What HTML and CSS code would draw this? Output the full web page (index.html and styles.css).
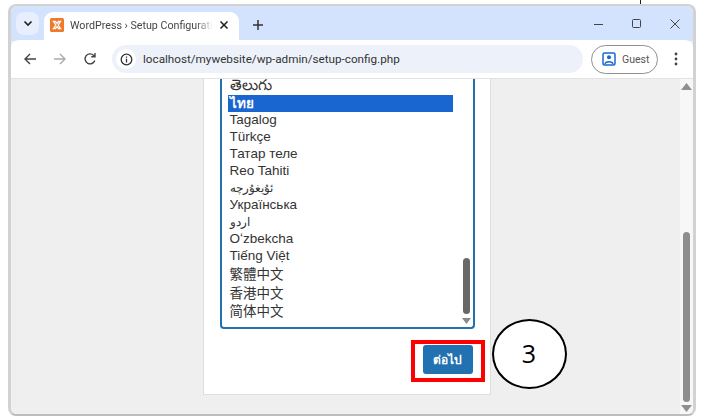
FILE: index.html
```html
<!DOCTYPE html>
<html lang="en">
<head>
<meta charset="utf-8">
<title>WordPress › Setup Configuration File</title>
<link rel="stylesheet" href="styles.css">
</head>
<body>
<div class="window">
  <header class="tabstrip">
    <button class="tabsearch" aria-label="Tab search">
      <svg width="10" height="7" viewBox="0 0 10 7"><path d="M1.5 1.5 5 5l3.5-3.5" fill="none" stroke="#1f1f1f" stroke-width="1.6"/></svg>
    </button>
    <div class="tab">
      <svg class="favicon" width="14" height="14" viewBox="0 0 14 14"><rect width="14" height="14" rx="1.5" fill="#ef7a2b"/><path d="M3.5 3.5h2l1.5 1.8L8.500 3.500h2l-2.300 3.500 2.300 3.500h-2L7 8.700 5.500 10.500h-2L5.800 7z" fill="none" stroke="#fff" stroke-width="1.300"/></svg>
      <span class="tabtitle">WordPress › Setup Configuratio</span>
      <svg class="tabclose" width="10" height="10" viewBox="0 0 10 10"><path d="M1.500 1.500l7 7m0-7l-7 7" stroke="#1f1f1f" stroke-width="1.500"/></svg>
    </div>
    <svg class="newtab" width="12" height="12" viewBox="0 0 12 12"><path d="M6 1v10M1 6h10" stroke="#333" stroke-width="1.500"/></svg>
    <div class="winctrls">
      <svg width="12" height="12" viewBox="0 0 12 12"><path d="M1 6.500h9" stroke="#444" stroke-width="1"/></svg>
      <svg width="12" height="12" viewBox="0 0 12 12"><rect x="1.500" y="1.500" width="8" height="8" rx="1" fill="none" stroke="#444" stroke-width="1"/></svg>
      <svg width="12" height="12" viewBox="0 0 12 12"><path d="M1.500 1.500l9 9m0-9l-9 9" stroke="#444" stroke-width="1"/></svg>
    </div>
  </header>
  <nav class="toolbar">
    <svg class="navicon" width="14" height="14" viewBox="0 0 14 14"><path d="M13 7H2M7 2 2 7l5 5" fill="none" stroke="#444" stroke-width="1.400"/></svg>
    <svg class="navicon" width="14" height="14" viewBox="0 0 14 14"><path d="M1 7h11M7 2l5 5-5 5" fill="none" stroke="#aaa" stroke-width="1.400"/></svg>
    <svg class="navicon" width="14" height="14" viewBox="0 0 14 14"><path d="M11.800 8.500A5 5 0 1 1 10.500 3.200L12 4.500M12 1v3.700H8.300" fill="none" stroke="#444" stroke-width="1.400"/></svg>
    <div class="omnibox">
      <span class="infochip"><svg width="13" height="13" viewBox="0 0 13 13"><circle cx="6.500" cy="6.500" r="5.300" fill="none" stroke="#333" stroke-width="1.300"/><path d="M6.500 5.800v3.700M6.500 3.400v1.300" stroke="#333" stroke-width="1.300"/></svg></span>
      <span class="url">localhost/mywebsite/wp-admin/setup-config.php</span>
    </div>
    <div class="guest">
      <svg width="14" height="14" viewBox="0 0 14 14"><rect x="1" y="1" width="12" height="12" rx="1.500" fill="none" stroke="#1a66d0" stroke-width="1.500"/><circle cx="7" cy="5.300" r="2" fill="#1a66d0"/><path d="M3 12c.5-3 7.500-3 8 0" fill="none" stroke="#1a66d0" stroke-width="1.300"/></svg>
      <span>Guest</span>
    </div>
    <svg class="kebab" width="4" height="14" viewBox="0 0 4 14"><circle cx="2" cy="2" r="1.400" fill="#444"/><circle cx="2" cy="7" r="1.400" fill="#444"/><circle cx="2" cy="12" r="1.400" fill="#444"/></svg>
  </nav>
  <main class="viewport">
    <div class="page">
      <section class="card">
        <div class="listbox">
          <ul class="options">
            <li class="telugu">తెలుగు</li>
            <li class="selected">ไทย</li>
            <li>Tagalog</li>
            <li>Türkçe</li>
            <li>Татар теле</li>
            <li>Reo Tahiti</li>
            <li class="rtl">ئۇيغۇرچە</li>
            <li>Українська</li>
            <li class="rtl">اردو</li>
            <li>Oʻzbekcha</li>
            <li>Tiếng Việt</li>
            <li class="cjk">繁體中文</li>
            <li class="cjk">香港中文</li>
            <li class="cjk">简体中文</li>
          </ul>
          <div class="listscroll">
            <span class="thumb"></span>
            <svg width="9" height="6" viewBox="0 0 9 6"><path d="M0 0h9L4.500 6z" fill="#8a8a8a"/></svg>
          </div>
        </div>
        <div class="actions">
          <div class="highlight"><button class="next">ต่อไป</button></div>
          <div class="badge">3</div>
        </div>
      </section>
    </div>
    <div class="scrollbar">
      <svg width="11" height="7" viewBox="0 0 11 7"><path d="M5.500 0 11 7H0z" fill="#8f8f8f"/></svg>
      <span class="track"><span class="sthumb"></span></span>
      <svg width="11" height="7" viewBox="0 0 11 7"><path d="M0 0h11L5.500 7z" fill="#8f8f8f"/></svg>
    </div>
  </main>
</div>
<span class="topmark"></span>
</body>
</html>
```
FILE: styles.css
```css
* { box-sizing: border-box; }
html, body { margin: 0; height: 100%; background: #fff; overflow: hidden; }
body { font-family: "Liberation Sans", "Noto Sans CJK SC", sans-serif; padding: 4px 8px 3px 8px; height: 419px; width: 704px; }
.topmark { position: absolute; left: 640px; top: 0; width: 1px; height: 4px; background: #222; }
.window { width: 688px; height: 412px; border: 2px solid #d2d2d2; border-left-width: 3px; border-right-width: 3px; border-bottom-color: #bdbdbd; border-radius: 8px; overflow: hidden; display: flex; flex-direction: column; background: #efefef; }
.tabstrip { height: 35px; background: #d3e3fd; display: flex; align-items: flex-end; padding-left: 5px; position: relative; flex: none; }
.tabsearch { width: 23px; height: 23px; margin-bottom: 6px; border: 0; border-radius: 8px; background: #e7effd; display: flex; align-items: center; justify-content: center; padding: 0; }
.tab { width: 195px; height: 29px; margin-left: 5px; background: #fff; border-radius: 9px 9px 0 0; display: flex; align-items: center; padding: 0 10px 3px 6px; }
.favicon { flex: none; }
.tabtitle { font: 10.700px Roboto, "Liberation Sans", sans-serif; color: #444; margin-left: 6px; width: 143px; flex: none; white-space: nowrap; -webkit-mask-image: linear-gradient(90deg, #000 88%, transparent); mask-image: linear-gradient(90deg, #000 88%, transparent); }
.tabclose { flex: none; margin-left: 6px; }
.newtab { margin: 0 0 10px 13px; }
.winctrls { margin-left: auto; display: flex; gap: 26px; margin-right: 12px; margin-bottom: 11px; }
.toolbar { height: 39px; background: #fff; border-radius: 8px 8px 0 0; margin-top: -1px; display: flex; align-items: center; padding: 0 0 0 12px; flex: none; border-bottom: 1px solid #e3e3e3; position: relative; }
.navicon { margin-right: 16px; flex: none; }
.navicon:nth-of-type(3) { margin-right: 15px; }
.omnibox { width: 471px; height: 28px; border-radius: 14px; background: #edf2fa; display: flex; align-items: center; padding-left: 4px; }
.infochip { width: 20px; height: 20px; border-radius: 50%; background: #fff; display: flex; align-items: center; justify-content: center; }
.url { font: 11.700px Roboto, "Liberation Sans", sans-serif; color: #333; margin-left: 7px; white-space: nowrap; }
.guest { width: 67px; height: 29px; margin-left: 8px; border: 1px solid #8f8f8f; border-radius: 15px; display: flex; align-items: center; gap: 6px; padding-left: 10px; font: 10.500px Roboto, "Liberation Sans", sans-serif; color: #555; flex: none; }
.kebab { margin-left: 16px; flex: none; }
.viewport { flex: 1; min-height: 0; display: flex; background: #efefef; }
.page { flex: 1; display: flex; justify-content: center; padding-left: 2px; min-width: 0; }
.card { width: 288px; height: 316px; background: #fff; border: 1px solid #dedede; border-top: 0; padding: 0 15px 0 16px; }
.listbox { height: 250px; border: 2px solid #2271b1; border-top: 0; border-radius: 0 0 4px 4px; display: flex; position: relative; overflow: hidden; }
.options { list-style: none; margin: 0; padding: 0 0 0 6px; width: 231px; font-size: 13.500px; color: #333; flex: none; }
.options li { height: 17px; line-height: 15px; padding-left: 2px; white-space: nowrap; }
.options li.telugu { height: 16px; line-height: 12px; font-size: 15px; }
.options li.selected { background: #1a66d0; color: #fff; font-weight: 700; line-height: 17px; }
.options li.rtl { font-size: 11.500px; line-height: 17px; }
.options li.cjk { height: 18.500px; line-height: 19px; }
.listscroll { flex: 1; display: flex; flex-direction: column; align-items: flex-end; justify-content: flex-end; padding: 0 2px 3px 0; gap: 4px; }
.thumb { width: 7px; height: 56px; border-radius: 4px; background: #686868; margin-right: 1px; }
.actions { display: flex; justify-content: flex-end; padding-top: 11px; margin-right: -10px; position: relative; }
.highlight { border: 4px solid #f00; padding: 1px 8px; background: #fff; display: flex; height: 42px; width: 74px; }
.next { width: 50px; height: 29px; border: 0; border-radius: 3px; background: #2271b1; color: #fff; font: 700 12px "Noto Sans", "Liberation Sans", sans-serif; padding: 0; }
.badge { position: absolute; left: 272px; top: -10px; width: 75px; height: 70px; border: 2px solid #000; border-radius: 50%; background: #fff; font: 25px "Open Sans", "Liberation Sans", sans-serif; color: #000; display: flex; align-items: center; justify-content: center; padding-bottom: 2px; }
.scrollbar { width: 13px; flex: none; display: flex; flex-direction: column; align-items: center; padding: 4px 0 2px; background: #f7f7f7; gap: 3px; }
.track { flex: 1; width: 100%; display: flex; align-items: flex-end; justify-content: center; }
.sthumb { width: 7px; height: 170px; border-radius: 4px; background: #8e8e8e; }
```
